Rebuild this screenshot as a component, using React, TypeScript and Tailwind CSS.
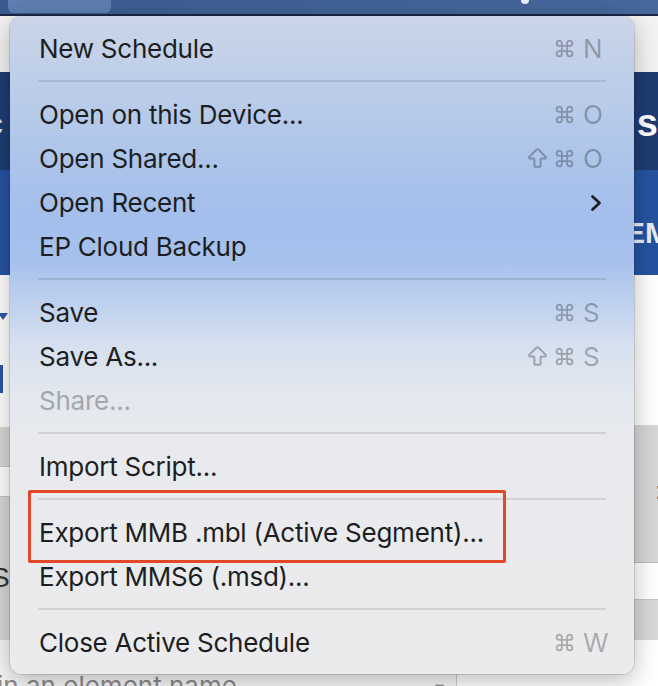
import React from "react";
import { Command, ArrowBigUp } from "lucide-react";

type Entry =
  | { sep: true }
  | {
      sep?: false;
      label: string;
      shift?: boolean;
      keyChar?: string;
      submenu?: boolean;
      disabled?: boolean;
    };

const entries: Entry[] = [
  { label: "New Schedule", keyChar: "N" },
  { sep: true },
  { label: "Open on this Device...", keyChar: "O" },
  { label: "Open Shared...", shift: true, keyChar: "O" },
  { label: "Open Recent", submenu: true },
  { label: "EP Cloud Backup" },
  { sep: true },
  { label: "Save", keyChar: "S" },
  { label: "Save As...", shift: true, keyChar: "S" },
  { label: "Share...", disabled: true },
  { sep: true },
  { label: "Import Script..." },
  { sep: true },
  { label: "Export MMB .mbl (Active Segment)..." },
  { label: "Export MMS6 (.msd)..." },
  { sep: true },
  { label: "Close Active Schedule", keyChar: "W" },
];

function Row({ e }: { e: Exclude<Entry, { sep: true }> }) {
  return (
    <div className="h-[44px] flex items-center pl-[29px] pr-[25px] pt-[1px]">
      <span
        className={
          e.disabled
            ? "text-[#a4a7ae] tracking-[-0.25px]"
            : "text-[#1d1e22] tracking-[-0.25px]"
        }
      >
        {e.label}
      </span>
      <div className="ml-auto flex items-center">
        {e.keyChar && (
          <div className="flex items-center text-black/[0.28]">
            <span className="w-[28px] flex items-center">
              {e.shift && (
                <ArrowBigUp size={25} strokeWidth={1.9} className="-ml-[2px]" />
              )}
            </span>
            <span className="w-[28px] flex items-center">
              <Command size={21} strokeWidth={2.1} className="-ml-[1px]" />
            </span>
            <span className="w-[26px]">{e.keyChar}</span>
          </div>
        )}
        {e.submenu && (
          <svg width="12" height="18" viewBox="0 0 12 18" className="mr-[7px]">
            <path
              d="M2.5 2.5 L9.5 9 L2.5 15.5"
              fill="none"
              stroke="#1d1e22"
              strokeWidth="2.8"
              strokeLinecap="round"
              strokeLinejoin="round"
            />
          </svg>
        )}
      </div>
    </div>
  );
}

export default function App() {
  return (
    <div className="relative w-[658px] h-[686px] overflow-hidden bg-white font-['Inter',sans-serif]">
      {/* top window bar */}
      <div className="h-[14px] bg-gradient-to-r from-[#3b5b90] to-[#47689d] flex items-start pl-[8px]">
        <div className="w-[103px] h-[13px] rounded-b-[6px] bg-[#5f7eb1]" />
        <div className="ml-[410px] w-[8px] h-[4px] rounded-b-full bg-white/90" />
      </div>
      <div className="h-[2px] bg-[#1c2a45]" />
      <div className="h-[56px] bg-[#f3f3f4]" />
      {/* navy header */}
      <div className="h-[98px] bg-[#1f3c72] flex items-center justify-between pt-[4px]">
        <span className="-ml-[12px] text-[30px] text-[#d6deea] font-['Liberation_Sans',sans-serif]">
          c
        </span>
        <span className="mr-0 text-[38px] font-bold text-white font-['Liberation_Sans',sans-serif]">
          s
        </span>
      </div>
      {/* blue tab strip */}
      <div className="h-[105px] bg-[#2653a0] flex items-start justify-end pt-[40px]">
        <span className="-mr-[12px] text-[30px] font-semibold text-[#e8eef8] font-['Liberation_Sans',sans-serif]">
          EM
        </span>
      </div>
      {/* content */}
      <div className="flex h-[411px]">
        <div className="w-[457px] border-r border-[#cfcfcf] flex flex-col">
          <div className="h-[152px] shrink-0 bg-white flex flex-col pt-[38px]">
            <svg width="10" height="8" viewBox="0 0 10 8" className="ml-[-2px]">
              <path d="M0 0 L10 0 L5 7 Z" fill="#2a58a6" />
            </svg>
            <div className="mt-[44px] w-[3px] h-[28px] bg-[#2a58a6]" />
          </div>
          <div className="h-[40px] shrink-0 bg-[#d8d8d8] border-b border-[#c4c4c4]" />
          <div className="h-[30px] shrink-0 bg-white border-b border-[#c4c4c4]" />
          <div className="h-[143px] shrink-0 bg-[#d6d6d6] flex items-center pt-[18px]">
            <span className="-ml-[9px] text-[28px] text-[#333] font-['Liberation_Sans',sans-serif]">
              S
            </span>
          </div>
          <div className="flex-1 min-h-0 bg-[#f6f6f6] flex items-start pt-[33px]">
            <span className="-ml-[3px] text-[26px] text-[#8a8a8a] leading-none shrink-0">
              in an element name
            </span>
            <span className="ml-auto mr-[12px] text-[18px] text-[#8a8a8a] leading-none pt-[6px]">
              ▾
            </span>
          </div>
        </div>
        <div className="flex-1 flex flex-col">
          <div className="h-[150px] shrink-0 bg-white" />
          <div className="h-[138px] shrink-0 bg-[#d6d6d6] border-b border-[#bdbdbd] flex items-start justify-end pt-[48px]">
            <span className="-mr-[4px] text-[24px] text-[#333] font-['Liberation_Sans',sans-serif]">
              :
            </span>
          </div>
          <div className="h-[37px] shrink-0 bg-white border-b border-[#c4c4c4]" />
          <div className="h-[40px] shrink-0 bg-[#d9d9d9]" />
          <div className="flex-1 bg-white" />
        </div>
      </div>

      {/* dropdown menu */}
      <div className="absolute left-[10px] top-[16px] w-[624px] h-[658px] rounded-[12px] py-[10px] text-[26px] leading-none shadow-[0_6px_24px_rgba(0,0,0,0.28),0_0_0_1px_rgba(0,0,0,0.12)] bg-[linear-gradient(to_bottom,#cad5e8_0%,#bfcfe9_9%,#afc6ea_20%,#a4bfec_30%,#a6c1ec_37%,#bccfee_43%,#d6e0ef_50%,#e4e8ef_58%,#e9eaed_66%,#ebebed_100%)]">
        {entries.map((e, i) =>
          e.sep ? (
            <div key={i} className="h-[22px] flex items-center px-[28px]">
              <div className="h-[2px] w-full bg-black/[0.1]" />
            </div>
          ) : (
            <Row key={i} e={e} />
          )
        )}
      </div>

      {/* annotation box */}
      <div className="absolute left-[28px] top-[490px] w-[478px] h-[73px] border-[3px] border-[#e3462b] rounded-[2px]" />
    </div>
  );
}
